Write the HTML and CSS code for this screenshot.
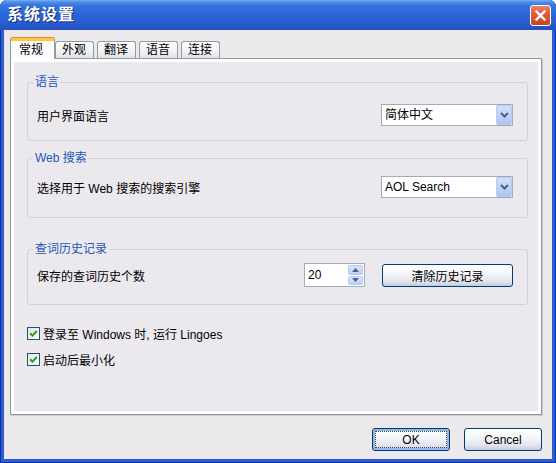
FILE: index.html
```html
<!DOCTYPE html>
<html lang="zh-CN">
<head>
    <meta charset="UTF-8">
    <meta name="viewport" content="width=device-width, initial-scale=1.0">
    <title>系统设置</title>
    <link rel="stylesheet" href="styles.css">
</head>
<body>

    <div class="window">
        <div class="titlebar">
            <span class="title">系统设置</span>
            <button class="close-btn" title="关闭">
                <svg width="13" height="13" viewBox="0 0 13 13"><path d="M2.5 2.5 L10.5 10.5 M10.5 2.5 L2.5 10.5" stroke="#fff" stroke-width="2.4" stroke-linecap="square" fill="none"/></svg>
            </button>
        </div>

        <div class="client">
            <div class="tabs">
                <div class="tab active">常规</div>
                <div class="tab">外观</div>
                <div class="tab">翻译</div>
                <div class="tab">语音</div>
                <div class="tab">连接</div>
            </div>

            <div class="panel">
                <div class="panel-inner">
                    <fieldset class="group group-lang">
                        <legend>语言</legend>
                        <div class="row">
                            <span class="label">用户界面语言</span>
                            <div class="combo">
                                <span class="combo-text">简体中文</span>
                                <span class="combo-btn">
                                    <svg width="9" height="6" viewBox="0 0 9 6"><path d="M1 1 L4.5 4.5 L8 1" stroke="#4d6185" stroke-width="2" fill="none"/></svg>
                                </span>
                            </div>
                        </div>
                    </fieldset>

                    <fieldset class="group group-search">
                        <legend>Web 搜索</legend>
                        <div class="row">
                            <span class="label">选择用于 Web 搜索的搜索引擎</span>
                            <div class="combo">
                                <span class="combo-text">AOL Search</span>
                                <span class="combo-btn">
                                    <svg width="9" height="6" viewBox="0 0 9 6"><path d="M1 1 L4.5 4.5 L8 1" stroke="#4d6185" stroke-width="2" fill="none"/></svg>
                                </span>
                            </div>
                        </div>
                    </fieldset>

                    <fieldset class="group group-history">
                        <legend>查词历史记录</legend>
                        <div class="row">
                            <span class="label grow">保存的查词历史个数</span>
                            <div class="spin">
                                <span class="spin-text">20</span>
                                <span class="spin-btns">
                                    <span class="spin-btn">
                                        <svg width="7" height="4" viewBox="0 0 7 4"><path d="M0 4 L3.5 0 L7 4 Z" fill="#4d6185"/></svg>
                                    </span>
                                    <span class="spin-btn">
                                        <svg width="7" height="4" viewBox="0 0 7 4"><path d="M0 0 L3.5 4 L7 0 Z" fill="#4d6185"/></svg>
                                    </span>
                                </span>
                            </div>
                            <button class="btn btn-wide">清除历史记录</button>
                        </div>
                    </fieldset>

                    <label class="check first">
                        <span class="box">
                            <svg width="9" height="9" viewBox="0 0 9 9"><path d="M1.2 4.2 L3.5 6.6 L7.8 2" stroke="#21a121" stroke-width="2" fill="none"/></svg>
                        </span>
                        登录至 Windows 时, 运行 Lingoes
                    </label>
                    <label class="check">
                        <span class="box">
                            <svg width="9" height="9" viewBox="0 0 9 9"><path d="M1.2 4.2 L3.5 6.6 L7.8 2" stroke="#21a121" stroke-width="2" fill="none"/></svg>
                        </span>
                        启动后最小化
                    </label>
                </div>
            </div>

            <div class="footer">
                <button class="btn default">OK</button>
                <button class="btn">Cancel</button>
            </div>
        </div>
    </div>

</body>
</html>
```

FILE: styles.css
```css
* {
    margin: 0;
    padding: 0;
    box-sizing: border-box;
}
body {
    font-family: "Liberation Sans", "Noto Sans CJK SC", sans-serif;
    font-size: 12px;
    color: #000;
    background: #fff;
}
.window {
    width: 556px;
    height: 463px;
    display: flex;
    flex-direction: column;
    background: #2a60d4;
    border-radius: 7px 7px 0 0;
    box-shadow: inset 1px 0 #0c2fa6, inset -1px 0 #0c2fa6, inset 0 -1px #0c2fa6;
}
.titlebar {
    height: 30px;
    display: flex;
    align-items: center;
    padding: 0 5px 0 7px;
    border-radius: 7px 7px 0 0;
    background: linear-gradient(#7cb0f2 0, #4d8ce6 2px, #3574dc 6px, #2c66d6 14px, #2a5fd0 22px, #2553c4 28px, #2452c0 30px);
}
.title {
    color: #fff;
    font-size: 16px;
    font-weight: bold;
    letter-spacing: 1px;
    line-height: 20px;
    text-shadow: 1px 1px 0 #102a7a;
}
.close-btn {
    margin-left: auto;
    width: 21px;
    height: 21px;
    border: 1px solid #fff;
    border-radius: 3px;
    background: linear-gradient(#e8826a 0, #e2623f 30%, #d9532e 60%, #c7431f 100%);
    display: flex;
    align-items: center;
    justify-content: center;
}
.client {
    flex: 1;
    margin: 0 4px 4px;
    background: #ece9ed;
    display: flex;
    flex-direction: column;
}
.tabs {
    display: flex;
    align-items: flex-end;
    height: 20px;
    margin: 8px 0 0 6px;
}
.tab {
    width: 39px;
    height: 17px;
    margin-right: 3px;
    padding-left: 6px;
    line-height: 16px;
    border: 1px solid #919b9c;
    border-bottom: none;
    border-radius: 3px 3px 0 0;
    background: linear-gradient(#fdfdfe, #f2f2f5 60%, #dde1ea);
}
.tab.active {
    width: 45px;
    height: 21px;
    margin-right: 0;
    margin-bottom: -1px;
    padding-left: 8px;
    line-height: 18px;
    position: relative;
    z-index: 1;
    background: #fcfcfe;
    border-top: 3px solid #ffc73c;
    box-shadow: 0 -1px 0 #e68b2c;
}
.panel {
    height: 357px;
    margin: 0 10px 0 6px;
    padding: 3px;
    border: 1px solid #919b9c;
    background: #fff;
    box-shadow: 1px 1px 0 #c9ccd4;
}
.panel-inner {
    height: 100%;
    background: #ece9ee;
    padding: 13px 10px 0 13px;
}
.group {
    margin: 0;
    min-width: 0;
    border: 1px solid #d3d1d8;
    border-radius: 3px;
    padding: 0 14px 0 9px;
}
.group legend {
    margin-left: -4px;
    padding: 0 2px;
    line-height: 14px;
    color: #2356b8;
}
.group-lang {
    padding-top: 15px;
    padding-bottom: 14px;
}
.group-search {
    margin-top: 10px;
    padding-top: 11px;
    padding-bottom: 19px;
}
.group-history {
    margin-top: 24px;
    padding-top: 7px;
    padding-bottom: 17px;
}
.row {
    display: flex;
    align-items: center;
    justify-content: space-between;
    height: 22px;
}
.group-history .row {
    height: 24px;
    justify-content: flex-start;
}
.label.grow {
    flex: 1;
}
.combo {
    width: 132px;
    height: 22px;
    border: 1px solid #a5acb5;
    background: #fff;
    display: flex;
    align-items: center;
}
.combo-text {
    flex: 1;
    padding-left: 3px;
    line-height: 20px;
}
.combo-btn {
    width: 16px;
    height: 20px;
    border: 1px solid #b7caef;
    border-radius: 2px;
    background: linear-gradient(#d3e0fb, #bccff7 60%, #aec4f1);
    display: flex;
    align-items: center;
    justify-content: center;
}
.spin {
    width: 61px;
    height: 24px;
    border: 1px solid #a5acb5;
    background: #fff;
    display: flex;
    margin-right: 17px;
}
.spin-text {
    flex: 1;
    padding-left: 3px;
    line-height: 22px;
}
.spin-btns {
    width: 16px;
    display: flex;
    flex-direction: column;
    gap: 1px;
    padding: 1px 1px 1px 0;
}
.spin-btn {
    flex: 1;
    border: 1px solid #b7caef;
    border-radius: 2px;
    background: linear-gradient(#dbe6fc, #bccff7);
    display: flex;
    align-items: center;
    justify-content: center;
}
.btn {
    height: 23px;
    width: 78px;
    border: 1px solid #003c74;
    border-radius: 3px;
    font-family: inherit;
    font-size: 12px;
    color: #000;
    background: linear-gradient(#ffffff 0%, #f4f5f9 45%, #dfe3ec 80%, #c3cbda 100%);
}
.btn-wide {
    width: 131px;
}
.btn.default {
    box-shadow: inset 0 0 0 2px #95b6ea;
    outline: 1px dotted #444;
    outline-offset: -4px;
}
.check {
    display: flex;
    align-items: center;
    gap: 3px;
    height: 18px;
}
.check.first {
    margin-top: 19px;
    margin-bottom: 8px;
}
.box {
    width: 13px;
    height: 13px;
    border: 1px solid #1c5180;
    background: linear-gradient(135deg, #e4e4df, #fbfbfa);
    display: flex;
    align-items: center;
    justify-content: center;
}
.footer {
    display: flex;
    justify-content: flex-end;
    gap: 14px;
    margin-top: 13px;
    padding-right: 10px;
}
```
